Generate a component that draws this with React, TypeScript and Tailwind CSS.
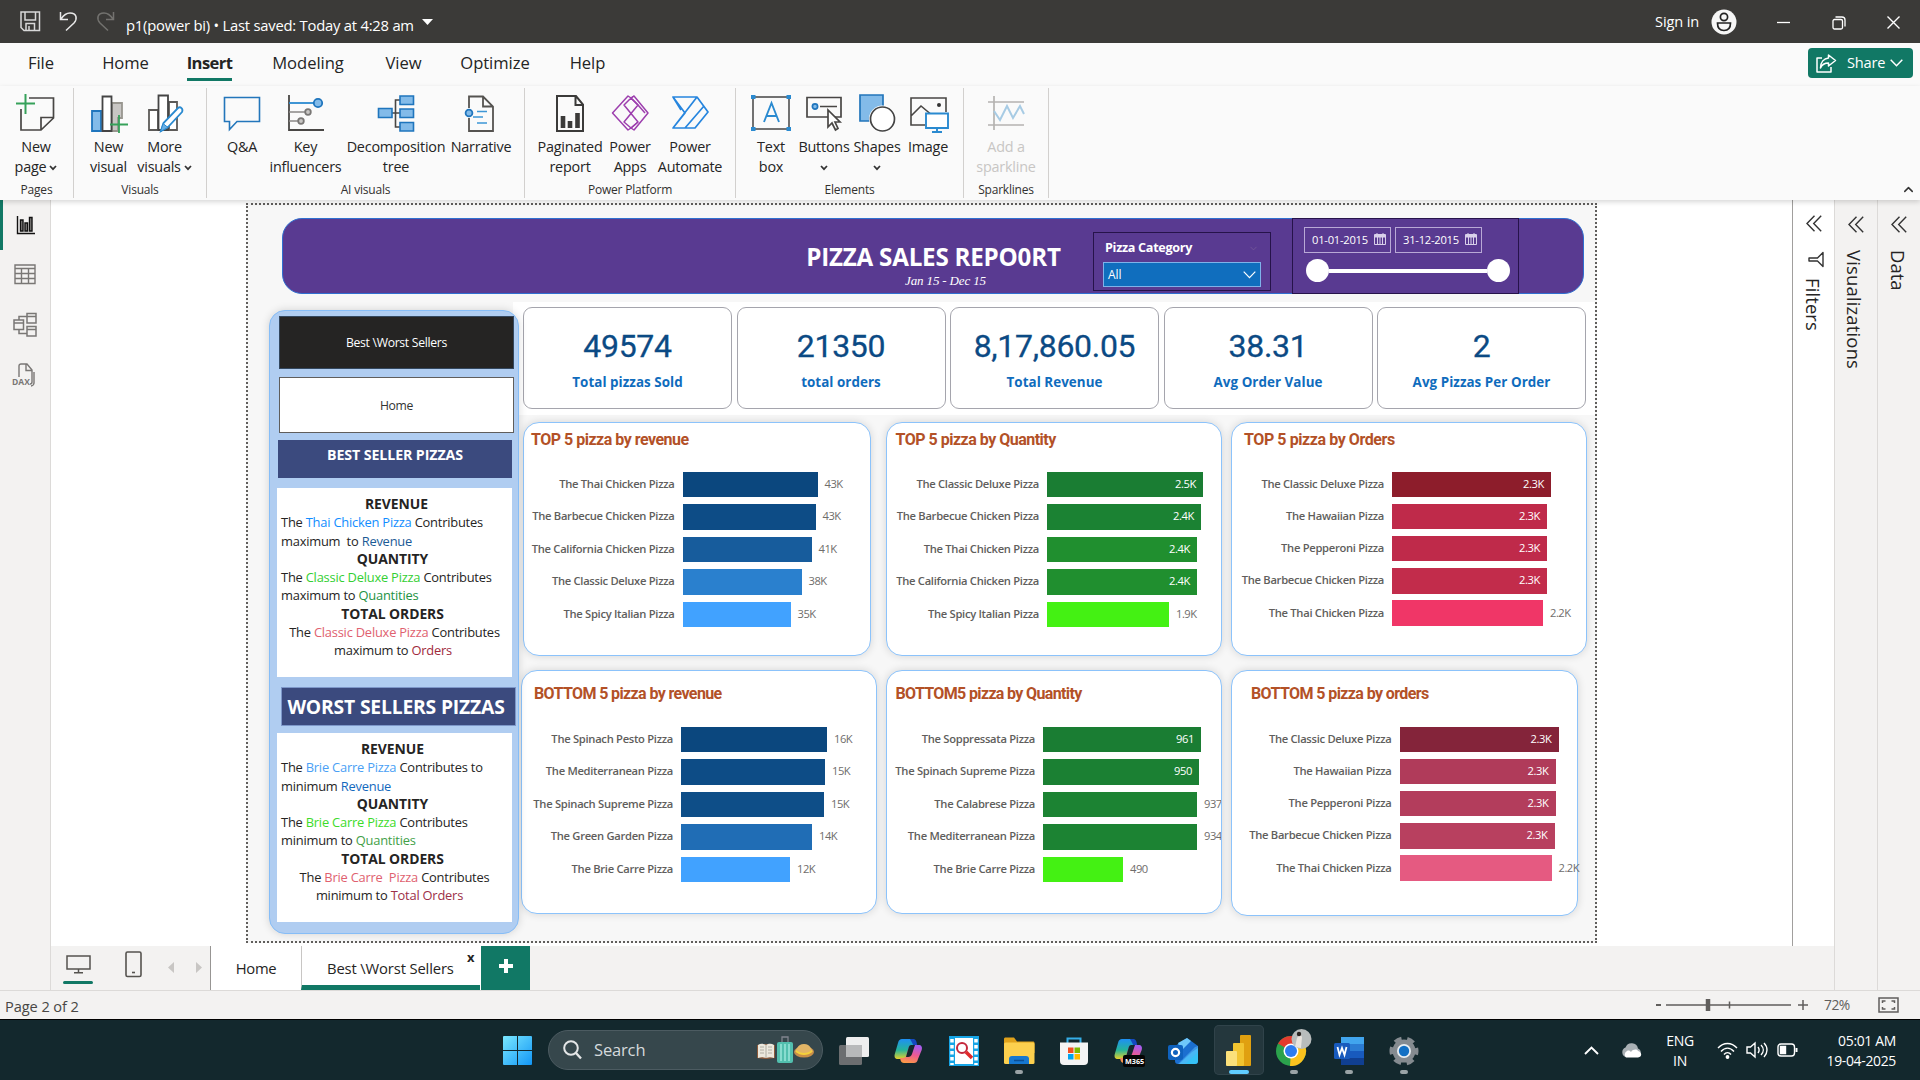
import React from "react";
import { ChevronDown, ChevronUp } from "lucide-react";

/* ---------- Title bar ---------- */

function TitleBar() {
  return (
    <header className="flex h-[43px] items-center bg-[#3b3a38] text-white">
      <svg className="ml-[20px]" width="21" height="21" viewBox="0 0 21 21" fill="none" stroke="#d8d8d8" strokeWidth="1.5">
        <path d="M1 1h18.500v18.500H4L1 16.500zM5 1v8h10.500V1M6 19.500v-7h8.500v7M9 19v-4" />
      </svg>
      <svg className="ml-[18px]" width="19" height="21" viewBox="0 0 19 21" fill="none" stroke="#e8e8e8" strokeWidth="1.5">
        <path d="M1.500 1v7.500H9M2 8C5 3.500 8 2 11 2c7 0 7.500 6 4 10l-8 7.500" />
      </svg>
      <svg className="ml-[18px]" width="19" height="21" viewBox="0 0 19 21" fill="none" stroke="#73726f" strokeWidth="1.500">
        <path d="M17.500 1v7.500H10M17 8C14 3.500 11 2 8 2 1 2 .5 8 4 12l8 7.500" />
      </svg>
      <span className="ml-[11px] mt-[7px] w-[289px] whitespace-nowrap text-[14.8px] tracking-[-0.230px]">
        p1(power bi) • Last saved: Today at 4:28 am
      </span>
      <svg className="ml-[7px]" width="11" height="6" viewBox="0 0 11 6">
        <path d="M0 0h11L5.500 6z" fill="#fff" />
      </svg>
      <span className="ml-auto text-[14.6px] tracking-[-0.150px]">Sign in</span>
      <svg className="ml-[12px]" width="26" height="26" viewBox="0 0 26 26">
        <circle cx="13" cy="13" r="12.500" fill="#f6f6f6" />
        <circle cx="13" cy="8" r="3.600" fill="none" stroke="#222" strokeWidth="1.700" />
        <path d="M6.500 14h13c0 5-2.500 7.500-6.500 7.500S6.500 19 6.500 14z" fill="none" stroke="#222" strokeWidth="1.700" />
      </svg>
      <svg className="ml-[40px]" width="14" height="14" viewBox="0 0 14 14" stroke="#fff" strokeWidth="1.300">
        <path d="M0 7.500h13" />
      </svg>
      <svg className="ml-[41px] mt-[2px]" width="14" height="14" viewBox="0 0 14 14" fill="none" stroke="#fff" strokeWidth="1.300">
        <rect x="1" y="3.500" width="9.500" height="9.500" rx="1.500" />
        <path d="M3.500 1h6.500a3 3 0 0 1 3 3v6.500" />
      </svg>
      <svg className="ml-[40px] mr-[19px] mt-[2px]" width="15" height="15" viewBox="0 0 15 15" stroke="#fff" strokeWidth="1.400">
        <path d="M1.500 1.500l12 12M13.500 1.500l-12 12" />
      </svg>
    </header>
  );
}

/* ---------- Menu ---------- */

const menus = [
  { label: "File", cls: "ml-[28px] w-[26px]" },
  { label: "Home", cls: "ml-[48px] w-[47px]" },
  { label: "Insert", cls: "ml-[38px] w-[45px] font-bold tracking-[-0.6px]" },
  { label: "Modeling", cls: "ml-[39px] w-[74px]" },
  { label: "View", cls: "ml-[40px] w-[37px]" },
  { label: "Optimize", cls: "ml-[38px] w-[70px]" },
  { label: "Help", cls: "ml-[39px] w-[37px]" },
];

function MenuBar() {
  return (
    <nav className="flex h-[43px] items-start bg-[#fafafa] text-[16.6px] tracking-[-0.05px] text-[#242424]">
      {menus.map((m) => (
        <div key={m.label} className={`flex flex-col items-center whitespace-nowrap ${m.cls}`}>
          <span className="mt-[5px] h-[30px] leading-[30px]">{m.label}</span>
          {m.label === "Insert" && <span className="h-[3px] w-[45px] bg-[#117865]" />}
        </div>
      ))}
      <button className="ml-auto mr-[7px] mt-[5px] flex h-[30px] w-[105px] items-center rounded-[4px] bg-[#117865] text-white">
        <svg className="ml-[8px]" width="21" height="19" viewBox="0 0 21 19" fill="none" stroke="#fff" strokeWidth="1.500">
          <path d="M6 4H1v14h14v-5M12.500 1l7 5.500-7 5.500V9C8.500 9 6 10.500 4.500 14 4.500 8 8 4.500 12.500 4z" strokeLinejoin="round" />
        </svg>
        <span className="ml-[10px] w-[38px] text-[14.600px] tracking-[-0.2px]">Share</span>
        <svg className="ml-[5px]" width="13" height="8" viewBox="0 0 13 8" fill="none" stroke="#fff" strokeWidth="1.500">
          <path d="M.7.7l5.800 6 5.800-6" />
        </svg>
      </button>
    </nav>
  );
}

/* ---------- Ribbon icons ---------- */

const ribbonIcons: Record<string, React.ReactNode> = {
  page: (
    <svg width="40" height="40" viewBox="0 0 40 40" fill="none" strokeWidth="1.700">
      <path d="M13 5h24.500v20L25 37H5V16M37.500 24.500H25V37" stroke="#484644" />
      <path d="M0 10.500h19M9.500 1v20" stroke="#36a15a" strokeWidth="2" />
    </svg>
  ),
  visual: (
    <svg width="40" height="40" viewBox="0 0 40 40" strokeWidth="1.800">
      <path d="M3 18h9v20H3z" fill="#83bbe9" stroke="#1f75bd" />
      <path d="M23 10h10v15h-4v13h-6z" fill="#c8c6c4" stroke="#98968f" />
      <path d="M13.500 3.500h9V38h-9z" fill="#fff" stroke="#444" />
      <path d="M21 31.500h18M30 22v19" stroke="#36a15a" strokeWidth="1.800" />
    </svg>
  ),
  visuals: (
    <svg width="42" height="42" viewBox="0 0 42 42" strokeWidth="1.800" fill="#fff">
      <path d="M5 18h9v20H5zM25 10h8v28h-8z" stroke="#5c5a58" />
      <path d="M14.500 3.500h9.500V38h-9.500z" stroke="#444" />
      <path d="M17 39l2.500-8L34 16c2.500-2 5.500 1 4 4L24 35z" stroke="#2a8ad0" />
      <path d="M16.500 39.500l2.500-8 5 4z" fill="#69afe5" stroke="#2a8ad0" strokeWidth="1" />
    </svg>
  ),
  qa: (
    <svg width="40" height="40" viewBox="0 0 40 40" fill="none" stroke="#2376bb" strokeWidth="1.600">
      <path d="M2.500 4.500h35v24H15l-7.500 8v-8h-5z" />
    </svg>
  ),
  key: (
    <svg width="38" height="38" viewBox="0 0 38 38" fill="none" strokeWidth="1.800">
      <path d="M2 1v35h35" stroke="#484644" />
      <path d="M2 9h26" stroke="#2a8ad0" />
      <path d="M2 18h17M2 27h9" stroke="#8a8886" strokeWidth="1.500" />
      <circle cx="31" cy="9" r="4.200" fill="#83bbe9" stroke="#1f75bd" />
      <circle cx="21" cy="18" r="2.800" fill="#c8c6c4" stroke="#797775" />
      <circle cx="14" cy="27" r="2.800" fill="#c8c6c4" stroke="#797775" />
    </svg>
  ),
  tree: (
    <svg width="38" height="38" viewBox="0 0 38 38" fill="#83bbe9" stroke="#1f75bd" strokeWidth="1.600">
      <path d="M14 19h9M24 6h-5.500v27H24" fill="none" stroke="#484644" />
      <path d="M1.500 14.500H15v9H1.500zM23 2h13.500v8.500H23zM23 15h13.500v8.500H23zM23 28.500h13.500V37H23z" />
    </svg>
  ),
  narrative: (
    <svg width="40" height="40" viewBox="0 0 40 40" fill="none" strokeWidth="1.800">
      <path d="M8 15V3.500h14l10 10V38H8V25M22 3.500v10h10" stroke="#555350" />
      <path d="M16 18.500h10M12 24h10M16 30h10" stroke="#3d96d6" strokeWidth="1.600" />
      <circle cx="8" cy="20" r="3.400" fill="#83bbe9" stroke="#1f75bd" />
    </svg>
  ),
  report: (
    <svg width="34" height="40" viewBox="0 0 34 40" fill="none" stroke="#3b3a39" strokeWidth="2">
      <path d="M4 3h19l7 8.500V38H4zM22.500 3v9H30" />
      <path d="M10 35V23M17 35v-7M24.500 35V20" strokeWidth="4.600" />
    </svg>
  ),
  apps: (
    <svg width="38" height="38" viewBox="0 0 38 38" fill="none" stroke="#9d3fae" strokeWidth="1.500" strokeLinejoin="round">
      <path d="M17 2L1.500 19 17 36l3-2 3 2 14-17L23 2l-3 2zM20 4l-7 7 14 17-7 6-7-6 14-17z" />
      <path d="M23 2l-3 2 7 7 7 8M27 28l-7 6" />
    </svg>
  ),
  automate: (
    <svg width="38" height="38" viewBox="0 0 38 38" fill="none" stroke="#2685de" strokeWidth="1.700" strokeLinejoin="round">
      <path d="M2 3h24l11 15-13 16H2l12-15zM26 3L2 34M33 12L14 34M2 3l8 13" />
    </svg>
  ),
  text: (
    <svg width="40" height="40" viewBox="0 0 40 40" fill="none" strokeWidth="1.500">
      <path d="M2 4h36v32H2z" stroke="#444" />
      <path d="M13 29l7.500-19L28 29M16 23h9.500" stroke="#2a8ad0" strokeWidth="1.900" />
      <path d="M0 2h4.500v4H0zM35.500 2H40v4h-4.500zM0 34h4.500v4H0zM35.500 34H40v4h-4.500z" fill="#2a8ad0" />
    </svg>
  ),
  buttons: (
    <svg width="40" height="40" viewBox="0 0 40 40" fill="none" stroke="#484644" strokeWidth="1.700">
      <path d="M24 24H3V4.500h34V24h-7M16 13.500h17" />
      <circle cx="11" cy="13.500" r="2.600" fill="#83bbe9" stroke="#1f75bd" />
      <path d="M24 17v17l4-4 3.500 7 2.500-1.500-3-6.500h5z" fill="#fff" />
    </svg>
  ),
  shapes: (
    <svg width="40" height="40" viewBox="0 0 40 40" strokeWidth="1.700">
      <path d="M3 2h23v26H3z" fill="#83bbe9" stroke="#2376bb" />
      <circle cx="25.500" cy="26" r="13.500" fill="#fff" />
      <circle cx="25.500" cy="26" r="12" fill="#fff" stroke="#444" />
    </svg>
  ),
  image: (
    <svg width="42" height="42" viewBox="0 0 42 42" fill="none" stroke="#484644" strokeWidth="1.600">
      <path d="M18 33H4V6h35v14M4 24l10-10 12 10" />
      <circle cx="32" cy="13" r="2" fill="#333" stroke="none" />
      <path d="M19 21.500h22V36H19z" fill="#fff" stroke="#2a8ad0" strokeWidth="1.900" />
      <path d="M30 36v4M25 40h10" stroke="#2a8ad0" strokeWidth="1.900" />
    </svg>
  ),
  spark: (
    <svg width="38" height="38" viewBox="0 0 38 38" fill="none" stroke="#b5b3b1" strokeWidth="1.700">
      <path d="M1 8h36M1 31h36M7 2v34" />
      <path d="M7 17l6 9 7-14 6 12 7-12 4 8" stroke="#a7cbe4" strokeWidth="2" />
    </svg>
  ),
};

type Item = { icon: string; lines: string[]; w: string; drop?: boolean; off?: boolean };
const groups: { label: string; cls: string; pad: string; items: Item[] }[] = [
  { label: "Pages", cls: "w-[74px]", pad: "pl-[4px]", items: [{ icon: "page", lines: ["New", "page"], w: "w-[64px]", drop: true }] },
  {
    label: "Visuals",
    cls: "w-[133px]",
    pad: "pl-[7px]",
    items: [
      { icon: "visual", lines: ["New", "visual"], w: "w-[55px]" },
      { icon: "visuals", lines: ["More", "visuals"], w: "w-[57px]", drop: true },
    ],
  },
  {
    label: "AI visuals",
    cls: "w-[318px]",
    pad: "pl-[10px]",
    items: [
      { icon: "qa", lines: ["Q&A"], w: "w-[50px]" },
      { icon: "key", lines: ["Key", "influencers"], w: "w-[77px]" },
      { icon: "tree", lines: ["Decomposition", "tree"], w: "w-[104px]" },
      { icon: "narrative", lines: ["Narrative"], w: "w-[66px]" },
    ],
  },
  {
    label: "Power Platform",
    cls: "w-[211px]",
    pad: "pl-[12px]",
    items: [
      { icon: "report", lines: ["Paginated", "report"], w: "w-[66px]" },
      { icon: "apps", lines: ["Power", "Apps"], w: "w-[54px]" },
      { icon: "automate", lines: ["Power", "Automate"], w: "w-[66px]" },
    ],
  },
  {
    label: "Elements",
    cls: "w-[228px]",
    pad: "pl-[8px]",
    items: [
      { icon: "text", lines: ["Text", "box"], w: "w-[54px]" },
      { icon: "buttons", lines: ["Buttons", ""], w: "w-[52px]", drop: true },
      { icon: "shapes", lines: ["Shapes", ""], w: "w-[54px]", drop: true },
      { icon: "image", lines: ["Image"], w: "w-[48px]" },
    ],
  },
  { label: "Sparklines", cls: "w-[85px]", pad: "pl-[8px]", items: [{ icon: "spark", lines: ["Add a", "sparkline"], w: "w-[68px]", off: true }] },
];

function SmallCaret() {
  return (
    <svg className="mt-[2px]" width="8" height="6" viewBox="0 0 8 6" fill="none" stroke="#333" strokeWidth="1.700">
      <path d="M1 1l3 3.200L7 1" />
    </svg>
  );
}

function Ribbon() {
  return (
    <section className="relative z-20 flex h-[114px] bg-[#fafafa] pt-[2px] shadow-[0_2px_5px_rgba(0,0,0,0.16)]">
      {groups.map((g) => (
        <div key={g.label} className={`flex h-[110px] flex-col border-r border-[#d2d0ce] ${g.cls}`}>
          <div className={`flex h-[94px] ${g.pad}`}>
            {g.items.map((it) => (
              <div key={it.icon} className={`flex shrink-0 flex-col items-center ${it.w} ${it.off ? "text-[#c8c6c4]" : "text-[#242424]"}`}>
                <div className="flex h-[49px] items-center justify-center">{ribbonIcons[it.icon]}</div>
                {it.lines.map((l, i) => (
                  <span key={i} className="flex h-[20px] items-center gap-[3px] whitespace-nowrap text-[14.400px] leading-[20px] tracking-[-0.220px]">
                    {l}
                    {it.drop && i === 1 && <SmallCaret />}
                  </span>
                ))}
              </div>
            ))}
          </div>
          <span className="block h-[18px] text-center text-[12px] leading-[19px] tracking-[-0.200px] text-[#323130]">{g.label}</span>
        </div>
      ))}
      <ChevronUp className="ml-auto mr-[4px] mt-[94px]" size={15} strokeWidth={2.400} color="#333" />
    </section>
  );
}

/* ---------- View rail ---------- */

function ViewRail() {
  return (
    <aside className="flex w-[51px] flex-col items-center border-r border-[#dcdad8] bg-[#f3f2f1]">
      <div className="flex h-[50px] w-full items-center border-l-[3px] border-[#117865] pl-[13px]">
        <svg width="19" height="19" viewBox="0 0 19 19" fill="#8a8886" stroke="#111" strokeWidth="1.400">
          <path d="M1.500 0v17.500H19" fill="none" />
          <path d="M4.500 4h2.500v11H4.500zM9 7h2.500v8H9zM13.500 1.500H16V15h-2.500z" />
        </svg>
      </div>
      <svg className="mt-[14px]" width="22" height="21" viewBox="0 0 22 21" fill="none" stroke="#797775" strokeWidth="1.400">
        <path d="M1 1h20v18.500H1zM1 4.500h20M1 9.500h20M1 14.500h20M7.500 4.500v15M14.500 4.500v15" />
      </svg>
      <svg className="mt-[27px]" width="24" height="25" viewBox="0 0 24 25" fill="none" stroke="#797775" strokeWidth="1.500">
        <path d="M1 8h9.500v9.500H1zM1 11h9.500M14 1.500h9V11h-9zM14 4.500h9M14 14.500h9V24h-9zM14 17.500h9M6 8V4.500h8M6 17.500v4h8" />
      </svg>
      <svg className="mr-[2px] mt-[26px]" width="24" height="24" viewBox="0 0 24 24" fill="none" stroke="#797775" strokeWidth="1.400">
        <path d="M7 14V3a2 2 0 0 1 2-2h6l5 6v12c0 1.500-1 2-2 2M14 1v6.500h6M22 9v11c0 1.500-1.500 3-3 3" />
        <text x="0" y="22" fontSize="8.500" fontWeight="700" fontFamily="Open Sans, sans-serif" fill="#797775" stroke="none">DAX</text>
      </svg>
    </aside>
  );
}

/* ---------- Report header ---------- */

function CalendarIcon() {
  return (
    <svg width="12" height="12" viewBox="0 0 12 12" fill="none" stroke="#d9d0ea" strokeWidth="1">
      <path d="M.5 1.500h11v10H.5zM.5 4h11M3.500 4v7M6 4v7M8.500 4v7M3 0v2M9 0v2" />
      <path d="M1 2h10v1.500H1z" fill="#d9d0ea" />
    </svg>
  );
}

function ReportHeader() {
  return (
    <div className="ml-[34px] mt-[13px] flex h-[76px] w-[1302px] rounded-[20px] border border-[#2f6fd0] bg-[#593a91] text-white">
      <div className="ml-[513px] flex w-[275px] flex-col items-center whitespace-nowrap">
        <h1 className="mt-[22px] text-[24.200px] font-bold leading-[32px] tracking-[-0.230px]">PIZZA SALES REPO0RT</h1>
        <p className="mt-px ml-[24px] font-['Liberation_Serif'] text-[13px] italic leading-[14px] tracking-[-0.150px]">Jan 15 - Dec 15</p>
      </div>
      <div className="ml-[22px] mt-[13px] h-[59px] w-[178px] border-[1.500px] border-[#26134a] pl-[9px] pt-[5px]">
        <div className="flex h-[21px] items-center pl-[2px] text-[12.600px] font-bold tracking-[-0.300px]">
          <span className="w-[143px]">Pizza Category</span>
          <ChevronDown size={11} color="#7a5f9a" strokeWidth={1.500} />
        </div>
        <div className="mt-[3px] flex h-[25px] w-[158px] items-center justify-between border-[1.500px] border-[#7fb2ea] bg-[#106ebe] pl-[4px] pr-[4px] text-[12px]">
          <span>All</span>
          <svg width="13" height="8" viewBox="0 0 13 8" fill="none" stroke="#fff" strokeWidth="1.200">
            <path d="M.7.7l5.800 6 5.800-6" />
          </svg>
        </div>
      </div>
      <div className="-my-px ml-[21px] h-[76px] w-[227px] border-[1.500px] border-[#26134a] pl-[11px] pt-[8px]">
        <div className="flex gap-[4px] text-[11.200px] tracking-[-0.250px]">
          {["01-01-2015", "31-12-2015"].map((d) => (
            <div key={d} className="flex h-[26px] w-[87px] items-center border border-[#b9a9d6] pl-[7px]">
              <span className="w-[62px] pt-px">{d}</span>
              <span className="-mt-[3px]"><CalendarIcon /></span>
            </div>
          ))}
        </div>
        <div className="mt-[6px] flex w-[206px] items-center pl-[2px]">
          <span className="h-[23px] w-[23px] shrink-0 rounded-full bg-white" />
          <span className="h-[4px] flex-1 bg-white" />
          <span className="h-[23px] w-[23px] shrink-0 rounded-full bg-white" />
        </div>
      </div>
    </div>
  );
}

/* ---------- Seller panel ---------- */

function H({ children, shift = "" }: { children: React.ReactNode; shift?: string }) {
  return <p className={`-ml-[8px] text-center text-[13.900px] font-bold tracking-[-0.050px] ${shift}`}>{children}</p>;
}

function SellerPanel() {
  return (
    <div className="relative z-10 ml-[21px] mt-[16px] h-[624px] w-[250px] shrink-0 rounded-[16px] border-[1.500px] border-[#86bdf7] bg-[#b0cdf1] shadow-[0_0_8px_rgba(0,0,0,0.15)]">
      <div className="ml-[9px] mt-[5px] flex h-[53px] w-[235px] items-center justify-center border border-[#33475e] bg-[#252423] pt-[2px] text-[12.200px] tracking-[-0.300px] text-white">
        Best \Worst Sellers
      </div>
      <div className="ml-[9px] mt-[8px] flex h-[56px] w-[235px] items-center justify-center border border-[#605e5c] bg-white pt-[2px] text-[12.200px] tracking-[-0.300px] text-[#333]">Home</div>
      <div className="ml-[8px] mt-[7px] h-[38px] w-[234px] bg-[#3b4a7e] text-center text-[14.200px] font-bold leading-[30px] tracking-[-0.100px] text-white">
        BEST SELLER PIZZAS
      </div>
      <div className="ml-[7px] mt-[10px] h-[189px] w-[235px] whitespace-nowrap bg-white pl-[4px] pt-[7px] text-[12.900px] leading-[18.300px] tracking-[-0.220px] text-[#252423]">
        <H shift="pl-[8px]">REVENUE</H>
        <p>The <span className="text-[#118dff]">Thai Chicken Pizza</span> Contributes</p>
        <p>maximum&nbsp; to <span className="text-[#1a5a96]">Revenue</span></p>
        <H>QUANTITY</H>
        <p>The <span className="text-[#33cf33]">Classic Deluxe Pizza</span> Contributes</p>
        <p>maximum to <span className="text-[#239243]">Quantities</span></p>
        <H>TOTAL ORDERS</H>
        <p className="-ml-[4px] text-center">The <span className="text-[#e0616f]">Classic Deluxe Pizza</span> Contributes</p>
        <p className="-ml-[7px] text-center">maximum to <span className="text-[#a02a3c]">Orders</span></p>
      </div>
      <div className="ml-[11px] mt-[10px] h-[39px] w-[235px] whitespace-nowrap border border-[#7d97c9] bg-[#3b4a7e] pr-[5px] text-center text-[19.300px] font-bold leading-[37px] tracking-[-0.170px] text-white">
        WORST SELLERS PIZZAS
      </div>
      <div className="ml-[7px] mt-[7px] h-[189px] w-[235px] whitespace-nowrap bg-white pl-[4px] pt-[7px] text-[12.900px] leading-[18.300px] tracking-[-0.220px] text-[#252423]">
        <H>REVENUE</H>
        <p>The <span className="text-[#4a9ff5]">Brie Carre Pizza</span> Contributes to</p>
        <p>minimum <span className="text-[#1268bd]">Revenue</span></p>
        <H>QUANTITY</H>
        <p>The <span className="text-[#3ddb2a]">Brie Carre Pizza</span> Contributes</p>
        <p>minimum to <span className="text-[#43a047]">Quantities</span></p>
        <H>TOTAL ORDERS</H>
        <p className="-ml-[4px] text-center">The <span className="text-[#e0616f]">Brie Carre&nbsp; Pizza</span> Contributes</p>
        <p className="-ml-[14px] text-center">minimum to <span className="text-[#9c3049]">Total Orders</span></p>
      </div>
    </div>
  );
}

/* ---------- KPI cards ---------- */

const kpis = [
  ["49574", "Total pizzas Sold"],
  ["21350", "total orders"],
  ["8,17,860.05", "Total Revenue"],
  ["38.31", "Avg Order Value"],
  ["2", "Avg Pizzas Per Order"],
];

function KpiRow() {
  return (
    <div className="flex h-[113px] gap-[4.500px] bg-white pl-[10px] pt-[5px]">
      {kpis.map(([v, l]) => (
        <div key={l} className="flex h-[102px] w-[209px] flex-col items-center rounded-[9px] border border-[#a5a5ad] bg-white">
          <span className="mt-[18px] font-['Roboto'] text-[32px] leading-[40px] tracking-[-0.300px] text-[#0b4a84] [-webkit-text-stroke:0.300px_#0b4a84]">{v}</span>
          <span className="mt-[6px] text-[13.400px] font-bold leading-[20px] tracking-[0.050px] text-[#0f6cbd]">{l}</span>
        </div>
      ))}
    </div>
  );
}

/* ---------- Bar charts ---------- */

type Bar = [name: string, value: string, width: number, color: string, inside?: boolean];
type Chart = { title: string; card: string; titleCls: string; labelCls: string; gap: string; bars: Bar[] };

const topCharts: Chart[] = [
  {
    title: "TOP 5 pizza by revenue",
    card: "w-[348px] h-[234px]",
    titleCls: "ml-[7px] mt-[5px] mb-[19.5px] tracking-[-0.5px]",
    labelCls: "w-[150.5px]",
    gap: "gap-[7px]",
    bars: [
      ["The Thai Chicken Pizza", "43K", 135, "#0b477e"],
      ["The Barbecue Chicken Pizza", "43K", 133, "#0d4c86"],
      ["The California Chicken Pizza", "41K", 129, "#175c9c"],
      ["The Classic Deluxe Pizza", "38K", 119, "#2a80ce"],
      ["The Spicy Italian Pizza", "35K", 108, "#41a2ff"],
    ],
  },
  {
    title: "TOP 5 pizza by Quantity",
    card: "ml-[14.5px] w-[336px] h-[234px]",
    titleCls: "ml-[9px] mt-[5px] mb-[19.5px] tracking-[-0.5px]",
    labelCls: "w-[152.5px]",
    gap: "gap-[7px]",
    bars: [
      ["The Classic Deluxe Pizza", "2.5K", 156, "#1a7d33", true],
      ["The Barbecue Chicken Pizza", "2.4K", 154, "#1b8233", true],
      ["The Thai Chicken Pizza", "2.4K", 150, "#208f2f", true],
      ["The California Chicken Pizza", "2.4K", 150, "#208f2f", true],
      ["The Spicy Italian Pizza", "1.9K", 122, "#44f113"],
    ],
  },
  {
    title: "TOP 5 pizza by Orders",
    card: "ml-[9.5px] w-[356px] h-[234px]",
    titleCls: "ml-[12px] mt-[5px] mb-[19.5px] tracking-[-0.42px]",
    labelCls: "w-[152px]",
    gap: "gap-[6.7px]",
    bars: [
      ["The Classic Deluxe Pizza", "2.3K", 159, "#8d1d2b", true],
      ["The Hawaiian Pizza", "2.3K", 155, "#bf2a4a", true],
      ["The Pepperoni Pizza", "2.3K", 155, "#bf2a4a", true],
      ["The Barbecue Chicken Pizza", "2.3K", 155, "#c22c4b", true],
      ["The Thai Chicken Pizza", "2.2K", 151, "#f03667"],
    ],
  },
];

const bottomCharts: Chart[] = [
  {
    title: "BOTTOM 5 pizza by revenue",
    card: "w-[356px] h-[244px]",
    titleCls: "ml-[12px] mt-[11px] mb-[20.5px] tracking-[-0.62px]",
    labelCls: "w-[151px]",
    gap: "gap-[7px]",
    bars: [
      ["The Spinach Pesto Pizza", "16K", 146, "#0b477e"],
      ["The Mediterranean Pizza", "15K", 144, "#0d4c86"],
      ["The Spinach Supreme Pizza", "15K", 143, "#0e4e88"],
      ["The Green Garden Pizza", "14K", 131, "#206db5"],
      ["The Brie Carre Pizza", "12K", 109, "#41a2ff"],
    ],
  },
  {
    title: "BOTTOM5 pizza by Quantity",
    card: "ml-[8.5px] w-[336px] h-[244px] overflow-hidden",
    titleCls: "ml-[9px] mt-[11px] mb-[20.5px] tracking-[-0.65px]",
    labelCls: "w-[148.500px]",
    gap: "gap-[7px]",
    bars: [
      ["The Soppressata Pizza", "961", 158, "#1a7d33", true],
      ["The Spinach Supreme Pizza", "950", 156, "#1b8033", true],
      ["The Calabrese Pizza", "937", 154, "#1c8333"],
      ["The Mediterranean Pizza", "934", 154, "#1c8333"],
      ["The Brie Carre Pizza", "490", 80, "#44f113"],
    ],
  },
  {
    title: "BOTTOM 5 pizza by orders",
    card: "ml-[9.5px] w-[347px] h-[246px]",
    titleCls: "ml-[19px] mt-[11px] mb-[20.5px] tracking-[-0.6px]",
    labelCls: "w-[159.500px]",
    gap: "gap-[6.7px]",
    bars: [
      ["The Classic Deluxe Pizza", "2.3K", 159, "#84243a", true],
      ["The Hawaiian Pizza", "2.3K", 156, "#b03b5a", true],
      ["The Pepperoni Pizza", "2.3K", 156, "#b33d5c", true],
      ["The Barbecue Chicken Pizza", "2.3K", 155, "#b8405f", true],
      ["The Thai Chicken Pizza", "2.2K", 152, "#e55a81"],
    ],
  },
];

function ChartCard({ title, card, titleCls, labelCls, gap, bars }: Chart) {
  return (
    <div className={`shrink-0 rounded-[16px] border border-[#8cc3fb] bg-white shadow-[0_0_8px_rgba(0,0,0,0.14)] ${card}`}>
      <h2 className={`h-[24px] whitespace-nowrap font-['Roboto'] text-[16px] font-bold leading-[24px] text-[#b35127] ${titleCls}`}>{title}</h2>
      <div className={`flex flex-col ${gap}`}>
        {bars.map(([name, value, width, color, inside]) => (
          <div key={name} className="flex h-[25.500px] items-center whitespace-nowrap text-[11.200px]">
            <span className={`shrink-0 text-right font-semibold tracking-[-0.290px] text-[#605e5c] ${labelCls}`}>{name}</span>
            <span
              className="ml-[8px] flex h-full shrink-0 items-center justify-end pr-[7px] tracking-[-0.400px] text-white"
              style={{ width, backgroundColor: color }}
            >
              {inside && <span>{value}</span>}
            </span>
            {!inside && <span className="ml-[7px] tracking-[-0.500px] text-[#6f6d6b]">{value}</span>}
          </div>
        ))}
      </div>
    </div>
  );
}

function ReportPage() {
  return (
    <div className="ml-[195px] mt-[3px] h-[740px] w-[1351px] border-2 border-dotted border-[#605e5c] bg-[#f7f7f7]">
      <ReportHeader />
      <div className="flex">
        <SellerPanel />
        <div className="-ml-[6px] mt-[8px] w-[1082px] shrink-0">
          <KpiRow />
          <div className="ml-[10px] mt-[7px] flex">
            {topCharts.map((c) => <ChartCard key={c.title} {...c} />)}
          </div>
          <div className="ml-[8px] mt-[14px] flex items-start">
            {bottomCharts.map((c) => <ChartCard key={c.title} {...c} />)}
          </div>
        </div>
      </div>
    </div>
  );
}

/* ---------- Page tabs ---------- */

function PageTabs() {
  return (
    <div className="flex h-[44px] w-full bg-[#f3f2f1] text-[14.800px] text-[#252423]">
      <div className="ml-[12px] flex w-[30px] flex-col items-center">
        <svg className="mt-[9px]" width="25" height="19" viewBox="0 0 25 19" fill="none" stroke="#55534f" strokeWidth="1.500">
          <path d="M1 1h23v13H1zM12.500 14v3.500M8 17.700h9" />
        </svg>
        <span className="mt-[7px] h-[3px] w-[30px] rounded-full bg-[#117865]" />
      </div>
      <svg className="ml-[32px] mt-[5px]" width="17" height="27" viewBox="0 0 17 27" fill="none" stroke="#55534f" strokeWidth="1.600">
        <rect x="1" y="1" width="15" height="24.500" rx="1.500" />
        <path d="M7 21.500h3" />
      </svg>
      <svg className="ml-[26px] mt-[16px]" width="34" height="12" viewBox="0 0 34 12" fill="#c8c6c4">
        <path d="M6 0v11L0 5.500zM28 0v11l6-5.500z" />
      </svg>
      <div className="ml-[8px] w-[91px] border-l border-[#979593] bg-white text-center leading-[44px] tracking-[-0.300px]">Home</div>
      <div className="flex w-[179px] border-b-[5px] border-l border-b-[#117865] border-l-[#c8c6c4] bg-white">
        <span className="ml-[25px] w-[133px] whitespace-nowrap font-medium leading-[44px] tracking-[-0.150px]">Best \Worst Sellers</span>
        <span className="ml-[7px] text-[13px] font-bold leading-[23px]">x</span>
      </div>
      <div className="flex w-[50px] items-center justify-center border-l border-white bg-[#117865] pb-[4px]">
        <svg width="14" height="14" viewBox="0 0 14 14" stroke="#fff" strokeWidth="4"><path d="M0 7h14M7 0v14" /></svg>
      </div>
    </div>
  );
}

/* ---------- Collapsed panes ---------- */

function ExpandIcon() {
  return (
    <svg width="16" height="17" viewBox="0 0 16 17" fill="none" stroke="#333" strokeWidth="1.400">
      <path d="M8.500.8L1 8.500l7.500 7.700M15.200.8L7.700 8.500l7.500 7.700" />
    </svg>
  );
}

function SidePanes() {
  const label = "[writing-mode:vertical-rl] text-[18.500px] font-medium leading-[24px] text-[#252423] whitespace-nowrap";
  return (
    <>
      <aside className="flex w-[43px] flex-col items-center border-l border-[#dcdad8] bg-[#f3f2f1] pt-[16px]">
        <ExpandIcon />
        <span className={`mr-[5px] mt-[17px] tracking-[0.150px] ${label}`}>Visualizations</span>
      </aside>
      <aside className="flex w-[43px] flex-col items-center border-l border-[#dcdad8] bg-[#f3f2f1] pt-[16px]">
        <ExpandIcon />
        <span className={`mr-[3px] mt-[17px] ${label}`}>Data</span>
      </aside>
    </>
  );
}

function FiltersPane() {
  return (
    <aside className="ml-auto flex w-[42px] flex-col items-center border-l border-[#a19f9d] bg-white pt-[15px]">
      <ExpandIcon />
      <svg className="ml-[4px] mt-[19px]" width="16" height="17" viewBox="0 0 16 17" fill="none" stroke="#333" strokeWidth="1.400">
        <path d="M15 1.500v14L9.500 10H1V7h8.500z" strokeLinejoin="round" />
      </svg>
      <span className="mr-[2px] mt-[10px] whitespace-nowrap text-[18.500px] font-medium leading-[24px] tracking-[0.100px] text-[#252423] [writing-mode:vertical-rl]">Filters</span>
    </aside>
  );
}

/* ---------- Status bar ---------- */

function StatusBar() {
  return (
    <footer className="flex h-[29px] items-center border-t border-[#dcdad8] bg-[#f3f2f1] text-[14.600px] text-[#484644]">
      <span className="ml-[5px] mt-[3px] tracking-[-0.080px]">Page 2 of 2</span>
      <svg className="ml-auto" width="156" height="16" viewBox="0 0 156 16" stroke="#605e5c" fill="none" strokeWidth="1.500">
        <path d="M1 8h5" strokeWidth="2" />
        <path d="M11 8h125M74.500 4.500v7M143 8h10M148 3v10" />
        <path d="M53 2v12" strokeWidth="4.500" />
      </svg>
      <span className="ml-[13px] w-[54px] text-[13.800px] tracking-[-0.500px] text-[#605e5c]">72%</span>
      <svg className="mr-[21px]" width="21" height="16" viewBox="0 0 21 16" fill="none" stroke="#605e5c" strokeWidth="1.500">
        <path d="M1 1h19v14H1zM4.500 6V4h3M13.500 4h3v2M16.500 10v2h-3M7.500 12h-3v-2" />
      </svg>
    </footer>
  );
}

/* ---------- Taskbar ---------- */

function CopilotShape({ badge }: { badge?: boolean }) {
  const id = badge ? "m" : "c";
  return (
    <svg width="34" height="32" viewBox="0 0 34 32">
      <defs>
        <linearGradient id={`${id}a`} x1="0" y1="0" x2="0" y2="1">
          <stop offset="0" stopColor="#1e90f5" /><stop offset="0.55" stopColor="#25b49a" /><stop offset="1" stopColor="#e6d02a" />
        </linearGradient>
        <linearGradient id={`${id}b`} x1="0.600" y1="0" x2="0.300" y2="1">
          <stop offset="0" stopColor="#a65cf0" /><stop offset="0.500" stopColor="#ee5a92" /><stop offset="1" stopColor="#fb9a45" />
        </linearGradient>
      </defs>
      <path d="M10 4h10c2 0 3 1 3.500 3l.8 3h-3c-2 0-3 1-3.500 3l-2 8c-.8 2.500-2 3-4 3H6c-3 0-4-2-3.200-5L6 8c.8-3 2-4 4-4z" fill={`url(#${id}a)`} />
      <path d="M18 4h3c2 0 3 1 3.500 3l.7 3h-4l-2-4z" fill="#1549c0" />
      <path d="M22 28H12c-2 0-3-1-3.500-3l-.5-2h3c2 0 3-1 3.500-3l2-7c.8-2.500 2-3 4-3h6c3 0 4 2 3.200 5L26 24c-.8 3-2 4-4 4z" fill={`url(#${id}b)`} />
      <path d="M14.500 20l2.300-8c.7-2 2-2 3.200-2h3l-3 9c-.7 2-2 3-4 3h-2z" fill="#13282d" />
      {badge && (
        <>
          <rect x="11" y="20" width="22" height="12" rx="2" fill="#050505" />
          <text x="13" y="29" fontSize="7.200" fontWeight="700" fontFamily="Open Sans, sans-serif" fill="#fff">M365</text>
        </>
      )}
    </svg>
  );
}

const apps: { key: string; running?: boolean; active?: boolean; icon: React.ReactNode }[] = [
  {
    key: "taskview",
    icon: (
      <svg width="30" height="28" viewBox="0 0 30 28">
        <rect x="0" y="8" width="23" height="20" rx="1.500" fill="#6c6e70" />
        <rect x="7" y="0" width="23" height="20" rx="1.500" fill="#eeeeee" />
        <rect x="7" y="8" width="16" height="12" fill="#b8b9ba" />
      </svg>
    ),
  },
  { key: "copilot", icon: <CopilotShape /> },
  {
    key: "capture",
    icon: (
      <svg width="30" height="30" viewBox="0 0 30 30">
        <path d="M0 0h30v30H0z" fill="#16a5e6" />
        <path d="M6 2h18v26H6z" fill="#fff" />
        <path d="M3 3v26M27 3v26" stroke="#fff" strokeWidth="3.500" strokeDasharray="3.500 2.500" />
        <circle cx="13" cy="12" r="5" fill="#fff" stroke="#c4283c" strokeWidth="2" />
        <path d="M17 16l6 6" stroke="#e02a2a" strokeWidth="3.500" />
      </svg>
    ),
  },
  {
    key: "explorer",
    running: true,
    icon: (
      <svg width="32" height="28" viewBox="0 0 32 28">
        <path d="M1 2c0-1 .7-1.500 1.500-1.500H11l3 4h16c1 0 1.500.5 1.500 1.500v10H1z" fill="#e0a21b" />
        <rect x="1" y="5.500" width="30.500" height="21.500" rx="1.500" fill="#fcd04e" />
        <path d="M6 27v-5a3 3 0 0 1 3-3h14a3 3 0 0 1 3 3v5z" fill="#1678d0" />
        <path d="M11 23.500h10" stroke="#0b4f95" strokeWidth="1.500" />
      </svg>
    ),
  },
  {
    key: "store",
    icon: (
      <svg width="30" height="30" viewBox="0 0 30 30">
        <path d="M8.500 8V2.500h13V8" fill="none" stroke="#35aee8" strokeWidth="2" />
        <path d="M1 6.500h28V25a4 4 0 0 1-4 4H5a4 4 0 0 1-4-4z" fill="#f4f4f4" />
        <path d="M9 11.500h5.500V17H9z" fill="#f25022" /><path d="M15.500 11.500H21V17h-5.500z" fill="#7fba00" />
        <path d="M9 18h5.500v5.500H9z" fill="#00a4ef" /><path d="M15.500 18H21v5.500h-5.500z" fill="#ffb900" />
      </svg>
    ),
  },
  { key: "m365", icon: <CopilotShape badge /> },
  {
    key: "outlook",
    icon: (
      <svg width="31" height="28" viewBox="0 0 31 28">
        <path d="M7 9L19 1l11 8v15a3 3 0 0 1-3 3H10a3 3 0 0 1-3-3z" fill="#1b6fd0" />
        <path d="M10 6l9-5 4 3-10 10z" fill="#6fc8fa" />
        <path d="M30 11v13a3 3 0 0 1-3 3H11l13-12z" fill="#36c2f6" />
        <path d="M30 9v6L17 27h-7l17-17z" fill="#55b1f5" opacity=".6" />
        <rect x="0" y="8" width="15" height="15" rx="2" fill="#0f62be" />
        <circle cx="7.500" cy="15.500" r="3.600" fill="none" stroke="#fff" strokeWidth="2.200" />
      </svg>
    ),
  },
  {
    key: "powerbi",
    active: true,
    icon: (
      <svg width="25" height="31" viewBox="0 0 25 31">
        <rect x="14" y="0" width="11" height="31" rx="1" fill="#e0a010" />
        <rect x="7" y="8" width="11" height="23" rx="1" fill="#f2c430" />
        <rect x="0" y="16" width="11" height="15" rx="1" fill="#fbe07a" />
      </svg>
    ),
  },
  {
    key: "chrome",
    running: true,
    icon: (
      <svg className="-mt-[6px]" width="37" height="37" viewBox="0 0 37 37">
        <circle cx="16" cy="22" r="15" fill="#2ba24c" />
        <path d="M16 22L3 14.500A15 15 0 0 1 29 14.500z" fill="#e33b2e" />
        <path d="M16 22L29 14.500A15 15 0 0 1 15 37z" fill="#fcc31e" />
        <circle cx="16" cy="22" r="7.500" fill="#fff" />
        <circle cx="16" cy="22" r="6" fill="#2d7cf0" />
        <circle cx="26.500" cy="10" r="10" fill="#b8bcbc" />
        <path d="M20 18l2-9 3-4 2 3-1 11z" fill="#e9e4de" /><circle cx="24" cy="5" r="2.200" fill="#2b2522" />
      </svg>
    ),
  },
  {
    key: "word",
    running: true,
    icon: (
      <svg width="30" height="28" viewBox="0 0 30 28">
        <path d="M7 0h23v7H7z" fill="#41a5ee" /><path d="M7 7h23v7H7z" fill="#2b7cd3" />
        <path d="M7 14h23v7H7z" fill="#185abd" /><path d="M7 21h23v7H7z" fill="#103f91" />
        <rect x="0" y="6" width="16" height="16" rx="1.500" fill="#185abd" />
        <path d="M3.500 10l2 8L8 11l2.500 7 2-8" fill="none" stroke="#fff" strokeWidth="1.800" />
      </svg>
    ),
  },
  {
    key: "settings",
    running: true,
    icon: (
      <svg width="30" height="30" viewBox="0 0 30 30">
        <circle cx="15" cy="15" r="12" fill="none" stroke="#858b90" strokeWidth="5" strokeDasharray="7 5.566" strokeDashoffset="3.500" />
        <circle cx="15" cy="15" r="11.500" fill="#858b90" />
        <circle cx="15" cy="15" r="7" fill="#e8eef2" />
        <circle cx="15" cy="15" r="5.200" fill="#1270c4" />
      </svg>
    ),
  },
];

function Taskbar() {
  return (
    <footer className="flex h-[61px] items-center border-t border-black bg-[#13282d] text-white">
      <svg className="ml-[503px]" width="29" height="29" viewBox="0 0 29 29">
        <defs>
          <linearGradient id="win" x1="0" y1="0" x2="1" y2="1"><stop offset="0" stopColor="#7ae8ff" /><stop offset="1" stopColor="#1296f5" /></linearGradient>
        </defs>
        <path d="M0 1a1 1 0 0 1 1-1h13v14H0zM15 0h13a1 1 0 0 1 1 1v13H15zM0 15h14v14H1a1 1 0 0 1-1-1zM15 15h14v13a1 1 0 0 1-1 1H15z" fill="url(#win)" />
      </svg>
      <div className="ml-[16px] flex h-[40px] w-[275px] items-center rounded-full border border-[#4c5b61] bg-[#36474c]">
        <svg className="ml-[14px]" width="19" height="20" viewBox="0 0 19 20" fill="none" stroke="#e4e6e7" strokeWidth="2">
          <circle cx="8" cy="8" r="6.800" /><path d="M13 13l5 5.500" strokeWidth="2.400" />
        </svg>
        <span className="ml-[12px] mt-px text-[16.500px] tracking-[-0.150px] text-[#d5dadc]">Search</span>
        <svg className="ml-auto mr-[8px]" width="57" height="30" viewBox="0 0 57 30">
          <path d="M0 10l8-1h2l8 1v13l-8 1H8l-8-1z" fill="#8d5a3a" />
          <path d="M1 10c3-2 6-1 8 0v13c-3-1-5-1-8 0zM9 10c2-1 5-2 8 0v13c-3-1-5-1-8 0z" fill="#ece8dd" />
          <path d="M3 12h4M3 15h4M3 18h4M11 12h4M11 15h4M11 18h4M9 10v13" stroke="#a29e94" strokeWidth=".8" />
          <path d="M25 7V2h6v5" fill="none" stroke="#81858e" strokeWidth="1.300" />
          <rect x="20" y="7" width="16" height="21" rx="2" fill="#52bfae" />
          <path d="M24 9v17M28 9v17M32 9v17" stroke="#9be6da" strokeWidth="1.500" />
          <ellipse cx="47" cy="17" rx="10" ry="5.500" fill="#c98f48" />
          <path d="M38 16c2-1 2-7 9-7s7 6 9 7c-2 4-16 4-18 0z" fill="#e2b566" />
          <path d="M39 15c4 4 12 4 16 0v2c-4 4-12 4-16 0z" fill="#f5d23a" />
        </svg>
      </div>
      <div className="ml-[3px] flex">
        {apps.map((a) => (
          <div key={a.key} className="flex h-[60px] w-[55px] flex-col items-center">
            <div className={`mt-[5px] flex h-[50px] w-[50px] flex-col items-center rounded-[5px] ${a.active ? "bg-[#24373d] ring-1 ring-inset ring-[#30434a]" : ""}`}>
              <div className="flex h-[50px] items-center justify-center pt-[1px]">{a.icon}</div>
              {a.active && <span className="-mt-[5px] h-[4px] w-[20px] shrink-0 rounded-full bg-[#60cdff]" />}
              {a.running && <span className="-mt-[5px] h-[4px] w-[8px] shrink-0 rounded-full bg-[#9aa3a6]" />}
            </div>
          </div>
        ))}
      </div>
      <svg className="ml-auto" width="15" height="9" viewBox="0 0 15 9" fill="none" stroke="#fff" strokeWidth="1.900">
        <path d="M1 8l6.500-6.500L14 8" />
      </svg>
      <svg className="ml-[22px]" width="21" height="16" viewBox="0 0 21 16">
        <path d="M5 15a5 5 0 0 1-.5-9.500A6.500 6.500 0 0 1 17 6.500 4.500 4.500 0 0 1 16.500 15z" fill="#a9b0b4" />
        <path d="M5 15.500a4 4 0 0 1 1-6.500c2-1 3 0 4 1 2-3 6-3 7-1 4 1 4.500 6 0 6.500z" fill="#fff" />
      </svg>
      <div className="ml-[22px] w-[32px] pt-[2px] text-center text-[14px] leading-[20px] tracking-[-0.300px]">ENG<br />IN</div>
      <svg className="ml-[21px]" width="21" height="17" viewBox="0 0 21 17" fill="none" stroke="#fff" strokeWidth="1.400">
        <path d="M1 6c5.500-6 13.500-6 19 0M4 9.500c4-4.500 9-4.500 13 0M7 12.500c2-2.500 5-2.500 7 0" /><circle cx="10.500" cy="15" r="1.200" fill="#fff" />
      </svg>
      <svg className="ml-[8px]" width="22" height="18" viewBox="0 0 22 18" fill="none" stroke="#fff" strokeWidth="1.400">
        <path d="M1 6h3.500L9 2v14l-4.500-4H1zM12 6c1.500 2 1.500 4 0 6M15 4c3 3 3 7 0 10M18 2c4 4 4 10 0 14" />
      </svg>
      <svg className="ml-[9px]" width="21" height="14" viewBox="0 0 21 14" fill="none" stroke="#fff" strokeWidth="1.400">
        <rect x="1" y="1" width="16.500" height="12" rx="3" /><path d="M3.500 3.500h5v7h-5z" fill="#fff" /><path d="M19.500 5v4" strokeWidth="2" />
      </svg>
      <div className="ml-[14px] mr-[24px] w-[84px] whitespace-nowrap pt-[2px] text-right text-[13.900px] leading-[20px] tracking-[-0.300px]">
        05:01 AM<br />19-04-2025
      </div>
    </footer>
  );
}

export default function App() {
  return (
    <div className="flex h-[1080px] w-[1920px] flex-col overflow-hidden bg-white font-['Open_Sans',sans-serif]">
      <TitleBar />
      <MenuBar />
      <Ribbon />
      <div className="flex h-[790px]">
        <ViewRail />
        <div className="flex w-[1783px] flex-col">
          <div className="flex h-[746px]">
            <ReportPage />
            <FiltersPane />
          </div>
          <PageTabs />
        </div>
        <SidePanes />
      </div>
      <StatusBar />
      <Taskbar />
    </div>
  );
}
